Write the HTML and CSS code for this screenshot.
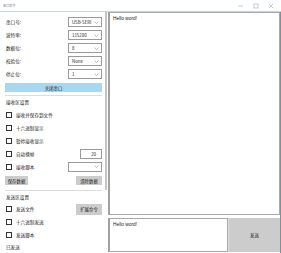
FILE: index.html
```html
<!DOCTYPE html>
<html>
<head>
<meta charset="utf-8">
<link rel="stylesheet" href="styles.css">
</head>
<body>
<div class="win">
  <div class="titlebar">
    <span class="title">串口助手</span>
    <div class="ctrls">
      <svg class="ic" width="6" height="6" viewBox="0 0 6 6"><line x1="0.5" y1="3" x2="5" y2="3" stroke="#9aa" stroke-width="0.6"/></svg>
      <svg class="ic" width="6" height="6" viewBox="0 0 6 6"><rect x="1" y="1" width="4" height="4" fill="none" stroke="#9aa" stroke-width="0.6"/></svg>
      <svg class="ic" width="6" height="6" viewBox="0 0 6 6"><path d="M1 1L5 5M5 1L1 5" stroke="#9aa" stroke-width="0.6"/></svg>
    </div>
  </div>
  <div class="main">
    <div class="left">
      <div class="panel">
        <div class="frow"><span class="lbl">串口号:</span><div class="combo"><span>USB-SERI</span><svg width="5" height="3" viewBox="0 0 5 3"><polyline points="0.5,0.5 2.5,2.5 4.5,0.5" fill="none" stroke="#777" stroke-width="0.5"/></svg></div></div>
        <div class="frow"><span class="lbl">波特率:</span><div class="combo"><span>115200</span><svg width="5" height="3" viewBox="0 0 5 3"><polyline points="0.5,0.5 2.5,2.5 4.5,0.5" fill="none" stroke="#777" stroke-width="0.5"/></svg></div></div>
        <div class="frow"><span class="lbl">数据位:</span><div class="combo"><span>8</span><svg width="5" height="3" viewBox="0 0 5 3"><polyline points="0.5,0.5 2.5,2.5 4.5,0.5" fill="none" stroke="#777" stroke-width="0.5"/></svg></div></div>
        <div class="frow"><span class="lbl">校验位:</span><div class="combo"><span>None</span><svg width="5" height="3" viewBox="0 0 5 3"><polyline points="0.5,0.5 2.5,2.5 4.5,0.5" fill="none" stroke="#777" stroke-width="0.5"/></svg></div></div>
        <div class="frow"><span class="lbl">停止位:</span><div class="combo"><span>1</span><svg width="5" height="3" viewBox="0 0 5 3"><polyline points="0.5,0.5 2.5,2.5 4.5,0.5" fill="none" stroke="#777" stroke-width="0.5"/></svg></div></div>
        <div class="btn-blue">关闭串口</div>
        <div class="sep"></div>
        <div class="head">接收区设置</div>
        <div class="crow"><span class="cb"></span><span class="ct">接收并保存到文件</span></div>
        <div class="crow"><span class="cb"></span><span class="ct">十六进制显示</span></div>
        <div class="crow"><span class="cb"></span><span class="ct">暂停接收显示</span></div>
        <div class="crow"><span class="cb"></span><span class="ct">自动换帧</span><div class="tbox">20</div></div>
        <div class="crow"><span class="cb"></span><span class="ct">接收脚本</span><div class="combo"><span></span><svg width="5" height="3" viewBox="0 0 5 3"><polyline points="0.5,0.5 2.5,2.5 4.5,0.5" fill="none" stroke="#777" stroke-width="0.5"/></svg></div></div>
        <div class="brow"><div class="btn-gray w1">保存数据</div><div class="btn-gray w2">清除数据</div></div>
        <div class="sep sep2"></div>
        <div class="head">发送区设置</div>
        <div class="crow r12"><span class="cb"></span><span class="ct">发送文件</span><div class="btn-gray w2 tall">扩展命令</div></div>
        <div class="crow"><span class="cb"></span><span class="ct">十六进制发送</span></div>
        <div class="crow"><span class="cb"></span><span class="ct">发送脚本</span></div>
        <div class="head">已发送</div>
      </div>
      <div class="scroll"><div class="thumb"></div></div>
    </div>
    <div class="right">
      <div class="recv">Hello word!</div>
      <div class="sendrow">
        <div class="sendbox">Hello word!</div>
        <div class="sendbtn">发送</div>
      </div>
    </div>
  </div>
</div>
</body>
</html>
```

FILE: styles.css
```css
html, body {
  margin: 0;
  padding: 0;
}
body {
  width: 281px;
  height: 253px;
  overflow: hidden;
  background: #ffffff;
  font-family: "Noto Sans CJK SC", "Noto Sans", sans-serif;
  font-size: 4.6px;
  color: #1a1a1a;
}
.win {
  width: 281px;
  height: 253px;
  display: flex;
  flex-direction: column;
}
.titlebar {
  height: 11px;
  border-bottom: 1px solid #c8d5df;
  display: flex;
  align-items: center;
  justify-content: space-between;
  padding-left: 3px;
}
.title {
  font-size: 3.2px;
  color: #8a8a8a;
}
.ctrls {
  display: flex;
  gap: 9px;
  padding-right: 7px;
  align-items: center;
}
.ic {
  display: block;
}
.main {
  display: flex;
  height: 241px;
  border-right: 1px solid #7f909c;
}
.left {
  width: 108px;
  display: flex;
}
.panel {
  width: 104px;
  box-sizing: border-box;
  padding: 5px 2px 0 5px;
  display: flex;
  flex-direction: column;
}
.frow {
  height: 10px;
  margin-bottom: 3px;
  display: flex;
  align-items: center;
  justify-content: space-between;
  flex-shrink: 0;
}
.lbl {
  padding-left: 1px;
}
.combo {
  width: 34px;
  height: 10px;
  box-sizing: border-box;
  border: 1px solid #9a9a9a;
  background: #fff;
  display: flex;
  align-items: center;
  justify-content: space-between;
  padding: 0 2px 0 3px;
  font-size: 4.4px;
}
.combo svg {
  display: block;
}
.btn-blue {
  margin-top: 1px;
  height: 9px;
  background: #a8d7ef;
  display: flex;
  align-items: center;
  justify-content: center;
  font-size: 4.4px;
  flex-shrink: 0;
}
.sep {
  margin-top: 3px;
  height: 1px;
  background: #dcdcdc;
  flex-shrink: 0;
}
.sep2 {
  margin-top: 5px;
}
.head {
  height: 12px;
  display: flex;
  align-items: center;
  padding-left: 1px;
  flex-shrink: 0;
}
.crow {
  height: 13px;
  display: flex;
  align-items: center;
  flex-shrink: 0;
}
.crow.r12 {
  height: 12px;
}
.cb {
  width: 6px;
  height: 6px;
  box-sizing: border-box;
  border: 1px solid #333;
  background: #fff;
  margin-left: 1px;
  flex-shrink: 0;
}
.ct {
  margin-left: 4px;
  flex: 1;
}
.tbox {
  width: 22px;
  height: 10px;
  box-sizing: border-box;
  border: 1px solid #9a9a9a;
  display: flex;
  align-items: center;
  justify-content: flex-end;
  padding-right: 5px;
  font-size: 4.4px;
}
.brow {
  margin-top: 3px;
  display: flex;
  justify-content: space-between;
  flex-shrink: 0;
}
.btn-gray {
  height: 9px;
  background: #cccccc;
  display: flex;
  align-items: center;
  justify-content: center;
  font-size: 4.4px;
}
.w1 {
  width: 23px;
}
.w2 {
  width: 26px;
}
.tall {
  height: 11px;
}
.scroll {
  width: 4px;
  display: flex;
  justify-content: center;
}
.thumb {
  width: 2px;
  height: 178px;
  background: #c4c4c4;
}
.right {
  flex: 1;
  display: flex;
  flex-direction: column;
}
.recv {
  height: 203px;
  box-sizing: border-box;
  border: 1px solid #a8a8a8;
  border-left: 2px solid #a0a0a0;
  padding: 3px 0 0 3px;
  font-family: "Liberation Sans", "Noto Sans", sans-serif;
  font-size: 4.8px;
}
.sendrow {
  margin-top: 3px;
  height: 34px;
  display: flex;
}
.sendbox {
  width: 120px;
  box-sizing: border-box;
  border: 1px solid #a8a8a8;
  border-left: 2px solid #a0a0a0;
  padding: 3px 0 0 3px;
  font-family: "Liberation Sans", "Noto Sans", sans-serif;
  font-size: 4.8px;
}
.sendbtn {
  flex: 1;
  background: #cccccc;
  border-left: 1px solid #dedede;
  display: flex;
  align-items: center;
  justify-content: center;
  font-size: 4.4px;
}
```
